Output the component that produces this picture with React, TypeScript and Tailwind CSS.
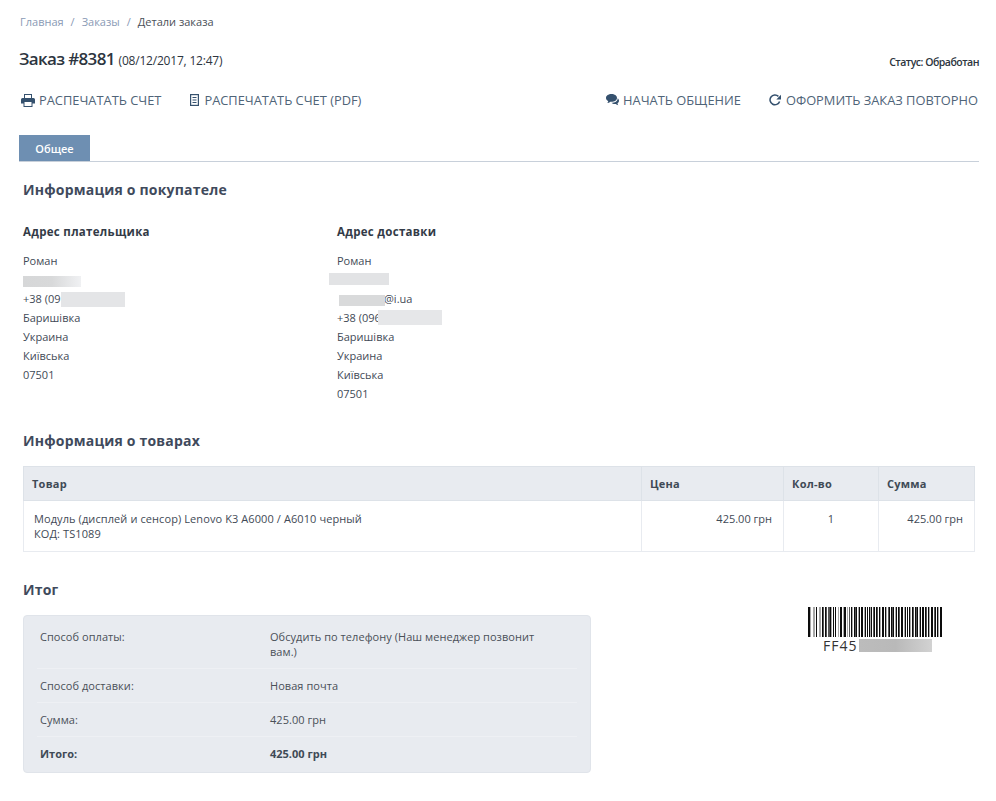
const font = { fontFamily: '"Open Sans", sans-serif' }

// one character per pixel column of the barcode: # black, d dark, g grey, . white
const barcode =
  "##g..gg.#..gg.#d.#d.dd#g.#.#..g.##g.g##.g.d.#g.#d#.g#.##.g#.#.#g#.d#.#d.#g.##.#g.d#.#d#.g#.#d.##.g#.#.d#g.#d.#d#.g#.##.#d.#g.##.d#.#g.##"
const barColor: Record<string, string> = { "#": "#0c0c0c", d: "#555555", g: "#a8a8a8" }

function Barcode() {
  return (
    <svg width={134} height={30} viewBox={`0 0 ${barcode.length} 30`} preserveAspectRatio="none" shapeRendering="crispEdges">
      {barcode.split("").map((c, i) => (c === "." ? null : <rect key={i} x={i} y={0} width={1} height={30} fill={barColor[c]} />))}
    </svg>
  )
}

function PrintIcon() {
  return (
    <svg width={14} height={13} viewBox="0 0 14 13">
      <rect x={3.5} y={0.5} width={7} height={5} fill="none" stroke="#35516e" />
      <path d="M1.5 4h11A1.5 1.5 0 0 1 14 5.500V9.500H0V5.500A1.500 1.500 0 0 1 1.500 4z" fill="#35516e" />
      <rect x={3} y={7.500} width={8} height={5} fill="#fff" stroke="#35516e" />
    </svg>
  )
}

function FileIcon() {
  return (
    <svg width={9} height={12} viewBox="0 0 9 12">
      <rect x={0.6} y={0.6} width={7.800} height={10.800} fill="none" stroke="#35516e" strokeWidth={1.200} />
      <path d="M2.500 3.500h4M2.500 6h4M2.500 8.500h4" stroke="#35516e" strokeWidth={1} />
    </svg>
  )
}

function CommentsIcon() {
  return (
    <svg width={13} height={12} viewBox="0 0 13 12">
      <path d="M5.500 0C8.500 0 11 1.700 11 3.900S8.500 7.800 5.500 7.800L4.400 7.700C3.500 8.500 2.500 8.900 1.300 9 1.900 8.300 2.200 7.600 2.200 6.900 .8 6.200 0 5.100 0 3.900 0 1.700 2.500 0 5.500 0z" fill="#35516e" />
      <path d="M11.700 4.200C12.500 4.900 13 5.700 13 6.700 13 7.700 12.500 8.500 11.500 9.200 11.500 9.900 11.800 10.600 12.300 11.200 11.300 11 10.400 10.600 9.700 10 7.900 10.200 6.400 9.800 5.500 8.800 8.800 8.800 11.800 7.200 11.700 4.200z" fill="#35516e" />
    </svg>
  )
}

function RepeatIcon() {
  return (
    <svg width={12} height={12} viewBox="0 0 12 12">
      <path d="M10.600 7.400A4.900 4.900 0 1 1 9.400 2.400" fill="none" stroke="#35516e" strokeWidth={1.500} />
      <path d="M12 .8V5.500H7.300z" fill="#35516e" />
    </svg>
  )
}

function Blur({ className }: { className: string }) {
  return <span className={`absolute ${className}`} />
}

function ActionLink({ icon, label, gap }: { icon: React.ReactNode; label: string; gap: string }) {
  return (
    <a className={`flex items-center text-[12.85px] leading-[20px] text-[#4f6478] ${gap}`}>
      {icon}
      {label}
    </a>
  )
}

const summaryRows = [
  { label: "Способ оплаты:", value: "Обсудить по телефону (Наш менеджер позвонит вам.)" },
  { label: "Способ доставки:", value: "Новая почта" },
  { label: "Сумма:", value: "425.00 грн" },
]

export default function App() {
  return (
    <div style={font} className="h-[801px] w-[996px] overflow-hidden bg-white pl-[19px] pr-[17px] text-[11px] leading-[19px] text-[#3f4a56]">
      <div className="flex gap-[7px] pl-px pt-[12px] text-[11px] leading-[19px]">
        <a className="text-[#8a9ab5]">Главная</a>
        <span className="text-[#8a9ab5]">/</span>
        <a className="text-[#8a9ab5]">Заказы</a>
        <span className="text-[#8a9ab5]">/</span>
        <span className="text-[#4a5058]">Детали заказа</span>
      </div>

      <div className="mt-[16px] flex items-end justify-between">
        <h1 className="text-[17px] font-semibold leading-[24px] tracking-[-0.65px] text-[#2d3540]">
          Заказ #8381 <span className="text-[12px] font-normal tracking-[-0.2px]">(08/12/2017, 12:47)</span>
        </h1>
        <span className="pb-[2px] text-[10.5px] font-semibold leading-[18px] tracking-[-0.5px] text-[#2d3540]">Статус: Обработан</span>
      </div>

      <div className="mt-[17px] flex justify-between pl-[2px] pr-px">
        <div className="flex gap-[29px]">
          <ActionLink icon={<PrintIcon />} label="РАСПЕЧАТАТЬ СЧЕТ" gap="gap-[4px]" />
          <ActionLink icon={<FileIcon />} label="РАСПЕЧАТАТЬ СЧЕТ (PDF)" gap="gap-[5px]" />
        </div>
        <div className="flex gap-[28px]">
          <ActionLink icon={<CommentsIcon />} label="НАЧАТЬ ОБЩЕНИЕ" gap="gap-[4px]" />
          <ActionLink icon={<RepeatIcon />} label="ОФОРМИТЬ ЗАКАЗ ПОВТОРНО" gap="gap-[5px]" />
        </div>
      </div>

      <div className="mt-[25px] border-b border-[#c8d0da]">
        <div className="flex h-[26px] w-[71px] items-center justify-center bg-[#6e8fb2] text-[11px] font-semibold text-white">Общее</div>
      </div>

      <div className="px-[4px]">
        <h2 className="mt-[18px] text-[14px] font-bold leading-[20px] tracking-[0.2px] text-[#3f4a5c]">Информация о покупателе</h2>

        <div className="mt-[22px] flex">
          <div className="w-[314px]">
            <h3 className="text-[11.5px] font-bold leading-[20px] tracking-[0.3px] text-[#333b47]">Адрес плательщика</h3>
            <div className="relative mt-[9px]">
              <div>Роман</div>
              <div className="h-[19px]" />
              <div>+38 (09</div>
              <div>Баришівка</div>
              <div>Украина</div>
              <div>Київська</div>
              <div>07501</div>
              <Blur className="left-0 top-[25px] h-[11px] w-[58px] bg-gradient-to-r from-[#d6d7d8] via-[#d8d9da] to-[#f0f1f3]" />
              <Blur className="left-[38px] top-[41px] h-[15px] w-[64px] bg-[#e4e5e7]" />
            </div>
          </div>
          <div>
            <h3 className="text-[11.5px] font-bold leading-[20px] tracking-[0.3px] text-[#333b47]">Адрес доставки</h3>
            <div className="relative mt-[9px]">
              <div>Роман</div>
              <div className="h-[19px]" />
              <div className="pl-[47px]">@i.ua</div>
              <div>+38 (096</div>
              <div>Баришівка</div>
              <div>Украина</div>
              <div>Київська</div>
              <div>07501</div>
              <Blur className="-left-[8px] top-[22px] h-[12px] w-[60px] bg-[#e2e3e5]" />
              <Blur className="left-[2px] top-[44px] h-[11px] w-[46px] bg-[#d9dadb]" />
              <Blur className="left-[41px] top-[59px] h-[15px] w-[64px] bg-[#e6e7e9]" />
            </div>
          </div>
        </div>

        <h2 className="mt-[28px] text-[14px] font-bold leading-[20px] tracking-[0.2px] text-[#3f4a5c]">Информация о товарах</h2>

        <table className="mt-[15px] w-[952px] table-fixed border-collapse text-[11px] leading-[15px]">
          <thead>
            <tr className="h-[34px] bg-[#e8ebf0] text-left font-bold tracking-[0.25px] text-[#3f4a56]">
              <th className="w-[618px] border border-[#dde2e8] px-[8px]">Товар</th>
              <th className="w-[142px] border border-[#dde2e8] px-[8px]">Цена</th>
              <th className="w-[95px] border border-[#dde2e8] px-[8px]">Кол-во</th>
              <th className="border border-[#dde2e8] px-[8px]">Сумма</th>
            </tr>
          </thead>
          <tbody>
            <tr className="h-[51px] align-top">
              <td className="border border-[#e8ebf0] px-[10px] py-[10px] tracking-[0.09px]">
                Модуль (дисплей и сенсор) Lenovo K3 A6000 / A6010 черный
                <br />
                КОД: TS1089
              </td>
              <td className="border border-[#e8ebf0] px-[11px] py-[10px] text-right">425.00 грн</td>
              <td className="border border-[#e8ebf0] px-[11px] py-[10px] text-center">1</td>
              <td className="border border-[#e8ebf0] px-[11px] py-[10px] text-right">425.00 грн</td>
            </tr>
          </tbody>
        </table>

        <h2 className="mt-[28px] text-[14px] font-bold leading-[20px] tracking-[0.2px] text-[#3f4a5c]">Итог</h2>

        <div className="mt-[15px] flex items-start justify-between">
          <div className="w-[568px] rounded-[4px] border border-[#e0e4ea] bg-[#e8ebf0] px-[13px] pb-[2px] pt-[4px]">
            {summaryRows.map((row) => (
              <div key={row.label} className="flex border-b border-[#eef0f4] py-[9px] leading-[15px] tracking-[0.05px] text-[#4a5058]">
                <div className="w-[233px] pl-[3px]">{row.label}</div>
                <div className="w-[285px]">{row.value}</div>
              </div>
            ))}
            <div className="flex py-[9px] font-bold leading-[15px] text-[#3f4a56]">
              <div className="w-[233px] pl-[3px]">Итого:</div>
              <div>425.00 грн</div>
            </div>
          </div>

          <div className="relative mr-[33px] mt-[-8px] w-[134px]">
            <Barcode />
            <div className="pl-[15px] text-[14px] leading-[17px] tracking-[1px] text-[#333]">FF45</div>
            <span className="absolute left-[51px] top-[32px] h-[13px] w-[73px] bg-gradient-to-r from-[#bcbcbc] via-[#b9b9b9] to-[#d2d2d2]" />
          </div>
        </div>
      </div>
    </div>
  )
}
